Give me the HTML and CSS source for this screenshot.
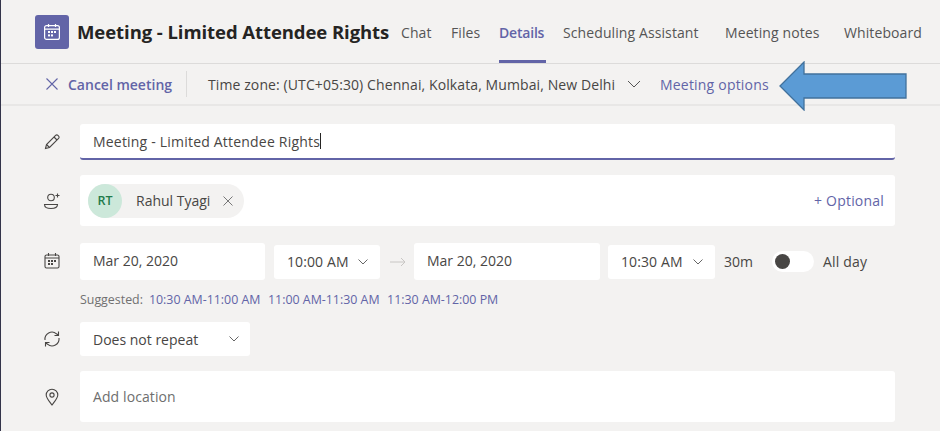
FILE: index.html
```html
<!DOCTYPE html>
<html lang="en">
<head>
<meta charset="utf-8">
<title>Meeting - Limited Attendee Rights</title>
<link rel="stylesheet" href="styles.css">
</head>
<body>
<div class="page">
  <header class="head">
    <div class="logo">
      <svg width="20" height="20" viewBox="0 0 20 20" fill="none" stroke="#fff" stroke-width="1.2"><rect x="2.6" y="3.6" width="14.8" height="13.8" rx="2"/><path d="M2.6 7.2h14.8M6.5 2v3M13.5 2v3"/><g fill="#fff" stroke="none"><rect x="6" y="9" width="2" height="2"/><rect x="9" y="9" width="2" height="2"/><rect x="12" y="9" width="2" height="2"/><rect x="6" y="12.4" width="2" height="2"/><rect x="9" y="12.4" width="2" height="2"/></g></svg>
    </div>
    <h1 class="title">Meeting - Limited Attendee Rights</h1>
    <nav class="tabs">
      <a class="tab t-chat">Chat</a>
      <a class="tab t-files">Files</a>
      <a class="tab active t-details">Details</a>
      <a class="tab t-sched">Scheduling Assistant</a>
      <a class="tab t-notes">Meeting notes</a>
      <a class="tab">Whiteboard</a>
    </nav>
  </header>
  <div class="toolbar">
    <svg class="x-icon" width="14" height="14" viewBox="0 0 14 14" fill="none" stroke="#6264a7" stroke-width="1.1"><path d="M1.5 1.5l11 11M12.5 1.5l-11 11"/></svg>
    <span class="cancel">Cancel meeting</span>
    <span class="divider"></span>
    <span class="zone">Time zone: (UTC+05:30) Chennai, Kolkata, Mumbai, New Delhi</span>
    <svg class="zone-chev" width="14" height="8" viewBox="0 0 14 8" fill="none" stroke="#555" stroke-width="1"><path d="M1 1l6 6 6-6"/></svg>
    <span class="options">Meeting options</span>
  </div>
  <main class="form">
    <div class="row row-title">
      <svg class="ico" width="18" height="18" viewBox="0 0 18 18" fill="none" stroke="#484644" stroke-width="1.1"><path d="M2.5 15.500l1-4L12.600 2.400a1.600 1.600 0 0 1 2.300 0l.7.7a1.600 1.600 0 0 1 0 2.300L6.500 14.500z"/><path d="M11 4l3 3M3.500 11.500l3 3"/></svg>
      <div class="field title-field"><span>Meeting - Limited Attendee Rights</span><i class="caret"></i></div>
    </div>
    <div class="row row-people">
      <svg class="ico" width="18" height="18" viewBox="0 0 18 18" fill="none" stroke="#484644" stroke-width="1.1"><circle cx="8" cy="5.500" r="3.300"/><path d="M1.500 12.500h13c0 3-2.500 4-6.500 4s-6.500-1-6.500-4z"/><path d="M14.500 1.500v4M12.500 3.500h4"/></svg>
      <div class="field people-field">
        <div class="chip"><span class="avatar">RT</span><span class="chip-name">Rahul Tyagi</span>
          <svg width="10" height="10" viewBox="0 0 10 10" fill="none" stroke="#777" stroke-width="1"><path d="M.5.500l9 9M9.500.500l-9 9"/></svg>
        </div>
        <span class="optional">+ Optional</span>
      </div>
    </div>
    <div class="row row-date">
      <svg class="ico ico-cal" width="18" height="18" viewBox="0 0 18 18" fill="none" stroke="#484644" stroke-width="1.1"><rect x="2" y="3" width="14" height="13" rx="1.500"/><path d="M2 6h14M5.500 1v3M12.500 1v3"/><g fill="#484644" stroke="none"><rect x="5" y="8" width="2" height="2"/><rect x="8" y="8" width="2" height="2"/><rect x="11" y="8" width="2" height="2"/><rect x="5" y="11" width="2" height="2"/><rect x="8" y="11" width="2" height="2"/></g></svg>
      <div class="field date">Mar 20, 2020</div>
      <div class="field time">10:00 AM<svg width="10" height="6" viewBox="0 0 10 6" fill="none" stroke="#666" stroke-width="1"><path d="M.5.500L5 5l4.500-4.500"/></svg></div>
      <svg class="arrow-to" width="16" height="10" viewBox="0 0 16 10" fill="none" stroke="#c8c6c4" stroke-width="1"><path d="M0 5h15M11 1l4 4-4 4"/></svg>
      <div class="field date date2">Mar 20, 2020</div>
      <div class="field time time2">10:30 AM<svg width="10" height="6" viewBox="0 0 10 6" fill="none" stroke="#666" stroke-width="1"><path d="M.5.500L5 5l4.500-4.500"/></svg></div>
      <span class="dur">30m</span>
      <span class="toggle"><i></i></span>
      <span class="allday">All day</span>
    </div>
    <div class="suggest">
      <span class="s-label">Suggested:</span>
      <a>10:30 AM-11:00 AM</a><a>11:00 AM-11:30 AM</a><a>11:30 AM-12:00 PM</a>
    </div>
    <div class="row row-repeat">
      <svg class="ico" width="18" height="18" viewBox="0 0 18 18" fill="none" stroke="#484644" stroke-width="1.1"><path d="M2 10a7 7 0 0 1 11.500-6.200L15 5M16 8a7 7 0 0 1-11.500 6.200L3 13"/><path d="M15.500 1.500V5.500H11.500M2.500 16.500V12.500H6.500"/></svg>
      <div class="field repeat">Does not repeat<svg width="10" height="6" viewBox="0 0 10 6" fill="none" stroke="#666" stroke-width="1"><path d="M.5.500L5 5l4.500-4.500"/></svg></div>
    </div>
    <div class="row row-loc">
      <svg class="ico" width="18" height="18" viewBox="0 0 18 18" fill="none" stroke="#484644" stroke-width="1.1"><path d="M9 17C5.500 12.500 3.200 10 3.200 7a5.800 5.800 0 0 1 11.600 0c0 3-2.300 5.500-5.800 10z"/><circle cx="9" cy="7" r="2.100"/></svg>
      <div class="field loc">Add location</div>
    </div>
  </main>
  <svg class="callout" width="130" height="50" viewBox="0 0 130 50"><path d="M1 25L25 1v12h102v24H25v12z" fill="#5b9bd5" stroke="#41719c" stroke-width="1.300"/></svg>
</div>
</body>
</html>
```

FILE: styles.css
```css
* { box-sizing: border-box; }
html, body { margin: 0; padding: 0; }
body { width: 940px; height: 431px; overflow: hidden; background: #f3f2f1; font-family: "Open Sans", "Noto Sans", sans-serif; color: #484644; }
.page { position: relative; width: 940px; height: 431px; border-left: 1px solid #33344a; overflow: hidden; }
.head { height: 64px; display: flex; align-items: flex-start; padding-left: 34px; border-bottom: 1px solid #dcdbda; }
.logo { width: 34px; height: 34px; margin-top: 15px; background: #6264a7; border-radius: 3px; display: flex; align-items: center; justify-content: center; }
.title { margin: 18px 0 0 8px; width: 324px; font-size: 18.500px; line-height: 28px; font-weight: 700; color: #252423; white-space: nowrap; letter-spacing: -0.07px; }
.tabs { display: flex; font-size: 14px; color: #555; }
.tab { display: block; height: 63px; padding-top: 23px; line-height: 20px; white-space: nowrap; letter-spacing: 0.1px; }
.t-chat { width: 50px; }
.t-files { width: 48px; }
.t-details { width: 64px; }
.t-sched { width: 162px; }
.t-notes { width: 119px; }
.tab.active { color: #6264a7; font-weight: 600; letter-spacing: -0.2px; position: relative; }
.tab.active::after { content: ""; position: absolute; left: 0; top: 60px; width: 47px; height: 3px; background: #6264a7; }
.toolbar { height: 42px; display: flex; align-items: center; font-size: 14px; border-bottom: 2px solid #e8e7e6; padding-left: 44px; white-space: nowrap; }
.x-icon { flex: none; margin-right: 9px; }
.cancel { color: #6264a7; font-weight: 600; width: 105px; letter-spacing: 0; }
.divider { width: 1px; height: 26px; background: #dcdbda; margin: 0 21px 0 13px; flex: none; }
.zone { width: 419px; color: #484644; letter-spacing: 0.1px; }
.zone-chev { flex: none; margin-right: 19px; }
.options { color: #6264a7; letter-spacing: 0.2px; }
.form { display: flex; flex-direction: column; padding-top: 18px; font-size: 14px; }
.row { display: flex; align-items: center; }
.ico { flex: none; margin: 0 19px 0 42px; }
.ico-cal { margin-top: -2px; }
.field { background: #fff; border-radius: 3px; display: flex; align-items: center; padding-left: 13px; white-space: nowrap; }
.row-title { height: 36px; }
.title-field { width: 815px; height: 36px; border-bottom: 2px solid #6264a7; letter-spacing: 0.2px; }
.caret { width: 1px; height: 16px; background: #252423; }
.row-people { height: 51px; margin-top: 15px; }
.people-field { width: 815px; height: 51px; padding: 0 11px 0 8px; justify-content: space-between; }
.chip { height: 34px; width: 156px; border-radius: 17px; background: #f3f2f1; display: flex; align-items: center; }
.avatar { width: 34px; height: 34px; border-radius: 50%; background: #cce8da; color: #237b4b; font-size: 12.500px; font-weight: 600; display: flex; align-items: center; justify-content: center; }
.chip-name { margin: 0 11px 0 14px; width: 76px; }
.optional { color: #6264a7; letter-spacing: 0.2px; }
.row-date { height: 37px; margin-top: 17px; }
.date { width: 185px; height: 37px; padding-bottom: 2px; }
.time { width: 106px; height: 34px; margin-left: 9px; justify-content: space-between; padding-right: 12px; letter-spacing: 0.1px; }
.arrow-to { flex: none; margin: 0 8px 0 10px; }
.date2 { width: 186px; }
.time2 { width: 107px; margin-left: 8px; }
.dur { margin-left: 9px; width: 48px; }
.toggle { width: 42px; height: 21px; border-radius: 11px; background: #fff; display: flex; align-items: center; padding-left: 3px; flex: none; }
.toggle i { width: 15px; height: 15px; border-radius: 50%; background: #484644; }
.allday { margin-left: 9px; letter-spacing: 0.2px; }
.suggest { height: 22px; margin-top: 8px; padding-left: 79px; display: flex; align-items: center; font-size: 12.400px; color: #6264a7; white-space: nowrap; }
.s-label { color: #707070; margin-right: 6px; }
.suggest a { margin-right: 7.500px; }
.row-repeat { height: 34px; margin-top: 12px; }
.repeat { width: 170px; height: 34px; justify-content: space-between; padding-right: 11px; }
.row-loc { height: 51px; margin-top: 15px; }
.loc { width: 815px; height: 51px; color: #6e6e6e; letter-spacing: 0.1px; }
.callout { position: absolute; left: 778px; top: 61px; }
```
